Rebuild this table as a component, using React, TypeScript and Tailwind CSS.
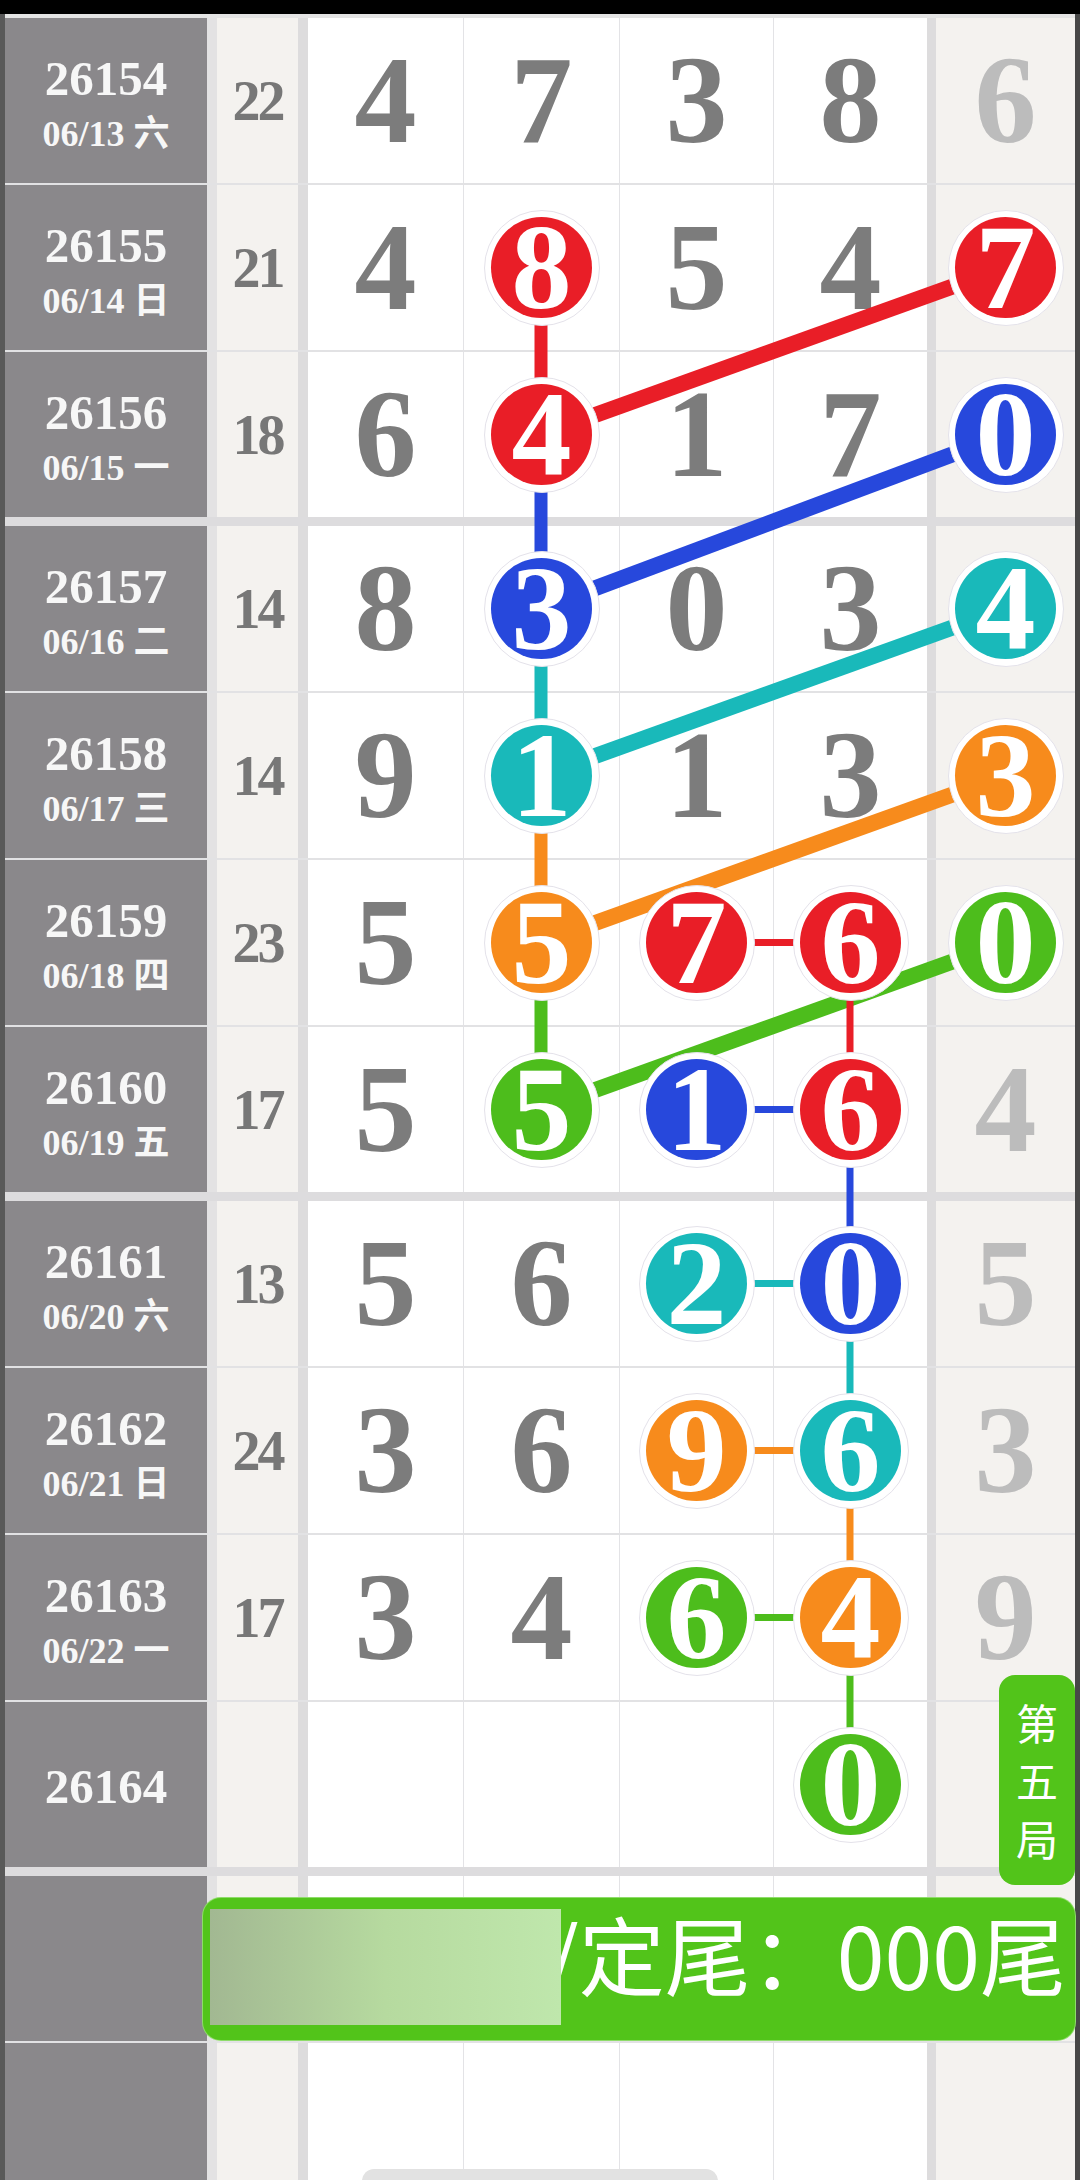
import React from "react";

const C = {
  red: "#e91e27",
  blue: "#2748dc",
  cyan: "#19b9ba",
  orange: "#f78b1c",
  green: "#4dbd1c",
} as const;
type Col = keyof typeof C;

type Row = {
  id: string;
  date?: string;
  wd?: string;
  sum: string;
  d: (number | null)[];
  balls: Partial<Record<number, Col>>;
};

const rows: Row[] = [
  { id: "26154", date: "06/13", wd: "六", sum: "22", d: [4, 7, 3, 8, 6], balls: {} },
  { id: "26155", date: "06/14", wd: "日", sum: "21", d: [4, 8, 5, 4, 7], balls: { 1: "red", 4: "red" } },
  { id: "26156", date: "06/15", wd: "一", sum: "18", d: [6, 4, 1, 7, 0], balls: { 1: "red", 4: "blue" } },
  { id: "26157", date: "06/16", wd: "二", sum: "14", d: [8, 3, 0, 3, 4], balls: { 1: "blue", 4: "cyan" } },
  { id: "26158", date: "06/17", wd: "三", sum: "14", d: [9, 1, 1, 3, 3], balls: { 1: "cyan", 4: "orange" } },
  { id: "26159", date: "06/18", wd: "四", sum: "23", d: [5, 5, 7, 6, 0], balls: { 1: "orange", 2: "red", 3: "red", 4: "green" } },
  { id: "26160", date: "06/19", wd: "五", sum: "17", d: [5, 5, 1, 6, 4], balls: { 1: "green", 2: "blue", 3: "red" } },
  { id: "26161", date: "06/20", wd: "六", sum: "13", d: [5, 6, 2, 0, 5], balls: { 2: "cyan", 3: "blue" } },
  { id: "26162", date: "06/21", wd: "日", sum: "24", d: [3, 6, 9, 6, 3], balls: { 2: "orange", 3: "cyan" } },
  { id: "26163", date: "06/22", wd: "一", sum: "17", d: [3, 4, 6, 4, 9], balls: { 2: "green", 3: "orange" } },
  { id: "26164", sum: "", d: [null, null, null, 0, null], balls: { 3: "green" } },
];

const groups = [
  [0, 1, 2],
  [3, 4, 5, 6],
  [7, 8, 9, 10],
];

// geometry (for the drawing overlay)
const rowTops: number[] = [];
{
  let y = 18;
  groups.forEach((g) => {
    g.forEach((_, k) => {
      rowTops.push(y);
      y += 165;
      if (k < g.length - 1) y += 2;
    });
    y += 9;
  });
}
const cy = rowTops.map((t) => t + 82.5);
const cx = [385.5, 541, 696, 850, 1005.5];

const serif = { fontFamily: '"Liberation Serif", "Noto Sans CJK SC", serif' };
const sans = { fontFamily: '"Noto Sans CJK SC", "Noto Sans", sans-serif' };

function Ball({ color, n }: { color: Col; n: number }) {
  return (
    <div className="relative z-20 flex h-[116px] w-[116px] items-center justify-center rounded-full border-[1.5px] border-[#e4e2ea] bg-white">
      <div
        className="flex h-[101px] w-[101px] items-center justify-center rounded-full"
        style={{ backgroundColor: C[color] }}
      >
        <span className="text-[120px] font-bold leading-none text-white" style={serif}>
          {n}
        </span>
      </div>
    </div>
  );
}

function Cell({ row, i, w, cls }: { row?: Row; i: number; w: string; cls: string }) {
  const v = row ? row.d[i] : null;
  const b = row ? row.balls[i] : undefined;
  return (
    <div className={`flex items-center justify-center ${w} ${cls}`}>
      {v !== null && v !== undefined ? (
        b ? (
          <Ball color={b} n={v} />
        ) : (
          <span
            className={`text-[124px] font-bold leading-none ${i === 4 ? "text-[#bcbcbc]" : "text-[#7c7c7c]"}`}
            style={serif}
          >
            {v}
          </span>
        )
      ) : null}
    </div>
  );
}

function RowView({ row, h }: { row?: Row; h: string }) {
  return (
    <div className={`flex ${h}`}>
      <div className="w-[5px] bg-[#595959]" />
      <div className="flex w-[202px] flex-col items-center justify-center gap-[13px] bg-[#8a888b] pt-[4px] text-[#f7f7f7]" style={serif}>
        {row && <div className="text-[49px] font-bold leading-none">{row.id}</div>}
        {row && row.date && (
          <div className="text-[36px] font-bold leading-none">
            {row.date} {row.wd}
          </div>
        )}
      </div>
      <div className="w-[10px] bg-[#e3e2e3]" />
      <div className="flex w-[81px] items-center justify-center bg-[#f4f2ef]">
        {row && (
          <span className="text-[56px] font-bold leading-none tracking-[-3px] text-[#777777]" style={serif}>
            {row.sum}
          </span>
        )}
      </div>
      <div className="w-[10px] bg-[#dddcdd]" />
      <Cell row={row} i={0} w="w-[155px]" cls="bg-white" />
      <Cell row={row} i={1} w="w-[156px]" cls="bg-white border-l border-[#e3e3e6]" />
      <Cell row={row} i={2} w="w-[154px]" cls="bg-white border-l border-[#e3e3e6]" />
      <Cell row={row} i={3} w="w-[154px]" cls="bg-white border-l border-[#e3e3e6]" />
      <div className="w-[9px] bg-[#dddcdd]" />
      <Cell row={row} i={4} w="w-[139px]" cls="bg-[#f4f2ef]" />
      <div className="w-[5px] bg-[#474747]" />
    </div>
  );
}

function HLine({ h, color }: { h: string; color: string }) {
  return (
    <div className={`flex ${h}`}>
      <div className="w-[5px] bg-[#595959]" />
      <div className={`flex-1 ${color}`} />
      <div className="w-[5px] bg-[#474747]" />
    </div>
  );
}

export default function App() {
  const lines: { x1: number; y1: number; x2: number; y2: number; c: Col; w: number }[] = [];
  // thick verticals in column 2
  for (let r = 1; r <= 5; r++) {
    lines.push({ x1: cx[1], y1: cy[r], x2: cx[1], y2: cy[r + 1], c: rows[r + 1].balls[1] as Col, w: 13 });
  }
  // thick diagonals col2 -> col5 one row up
  for (let r = 2; r <= 6; r++) {
    lines.push({ x1: cx[1], y1: cy[r], x2: cx[4], y2: cy[r - 1], c: rows[r].balls[1] as Col, w: 16 });
  }
  // thin verticals column 4
  for (let r = 5; r <= 9; r++) {
    lines.push({ x1: cx[3], y1: cy[r], x2: cx[3], y2: cy[r + 1], c: rows[r + 1].balls[3] as Col, w: 7 });
  }
  // thin horizontals col3 -> col4
  for (let r = 5; r <= 9; r++) {
    lines.push({ x1: cx[2], y1: cy[r], x2: cx[3], y2: cy[r], c: rows[r].balls[2] as Col, w: 7 });
  }

  return (
    <div className="relative h-[2180px] w-[1080px] overflow-hidden bg-white">
      <div className="h-[14px] bg-black" />
      <HLine h="h-[4px]" color="bg-[#e4e4e4]" />
      {groups.map((g, gi) => (
        <React.Fragment key={gi}>
          {g.map((ri, k) => (
            <React.Fragment key={ri}>
              <RowView row={rows[ri]} h="h-[165px]" />
              {k < g.length - 1 && <HLine h="h-[2px]" color="bg-[#e2e2e4]" />}
            </React.Fragment>
          ))}
          <HLine h="h-[9px]" color="bg-[#dddcde]" />
        </React.Fragment>
      ))}
      <RowView h="h-[165px]" />
      <HLine h="h-[2px]" color="bg-[#e2e2e4]" />
      <RowView h="h-[140px]" />

      <svg className="pointer-events-none absolute left-0 top-0 z-10" width={1080} height={2180}>
        {lines.map((l, i) => (
          <line key={i} x1={l.x1} y1={l.y1} x2={l.x2} y2={l.y2} stroke={C[l.c]} strokeWidth={l.w} />
        ))}
      </svg>

      {/* badge */}
      <div
        className="absolute left-[999px] top-[1675px] z-30 flex h-[210px] w-[76px] flex-col items-center justify-center rounded-[16px] bg-[#52c41a] text-[42px] leading-[58px] text-white"
        style={sans}
      >
        <span>第</span>
        <span>五</span>
        <span>局</span>
      </div>

      {/* banner */}
      <div className="absolute left-[203px] top-[1898px] z-30 flex h-[142px] w-[872px] items-start justify-end rounded-[18px] bg-[#52c41a] pr-[9px] pt-[12px] ring-1 ring-[#8fdc6a]">
        <span className="whitespace-nowrap text-[86px] leading-none text-white" style={sans}>
          /定尾：000尾
        </span>
        <div className="absolute left-[7px] top-[11px] h-[116px] w-[351px] bg-gradient-to-r from-[#a2b892] via-[#b6da9f] to-[#bfe7ac]" />
      </div>

      {/* bottom pill */}
      <div className="absolute left-[362px] top-[2169px] z-30 h-[24px] w-[356px] rounded-full bg-[#e2e2e2]" />
    </div>
  );
}
